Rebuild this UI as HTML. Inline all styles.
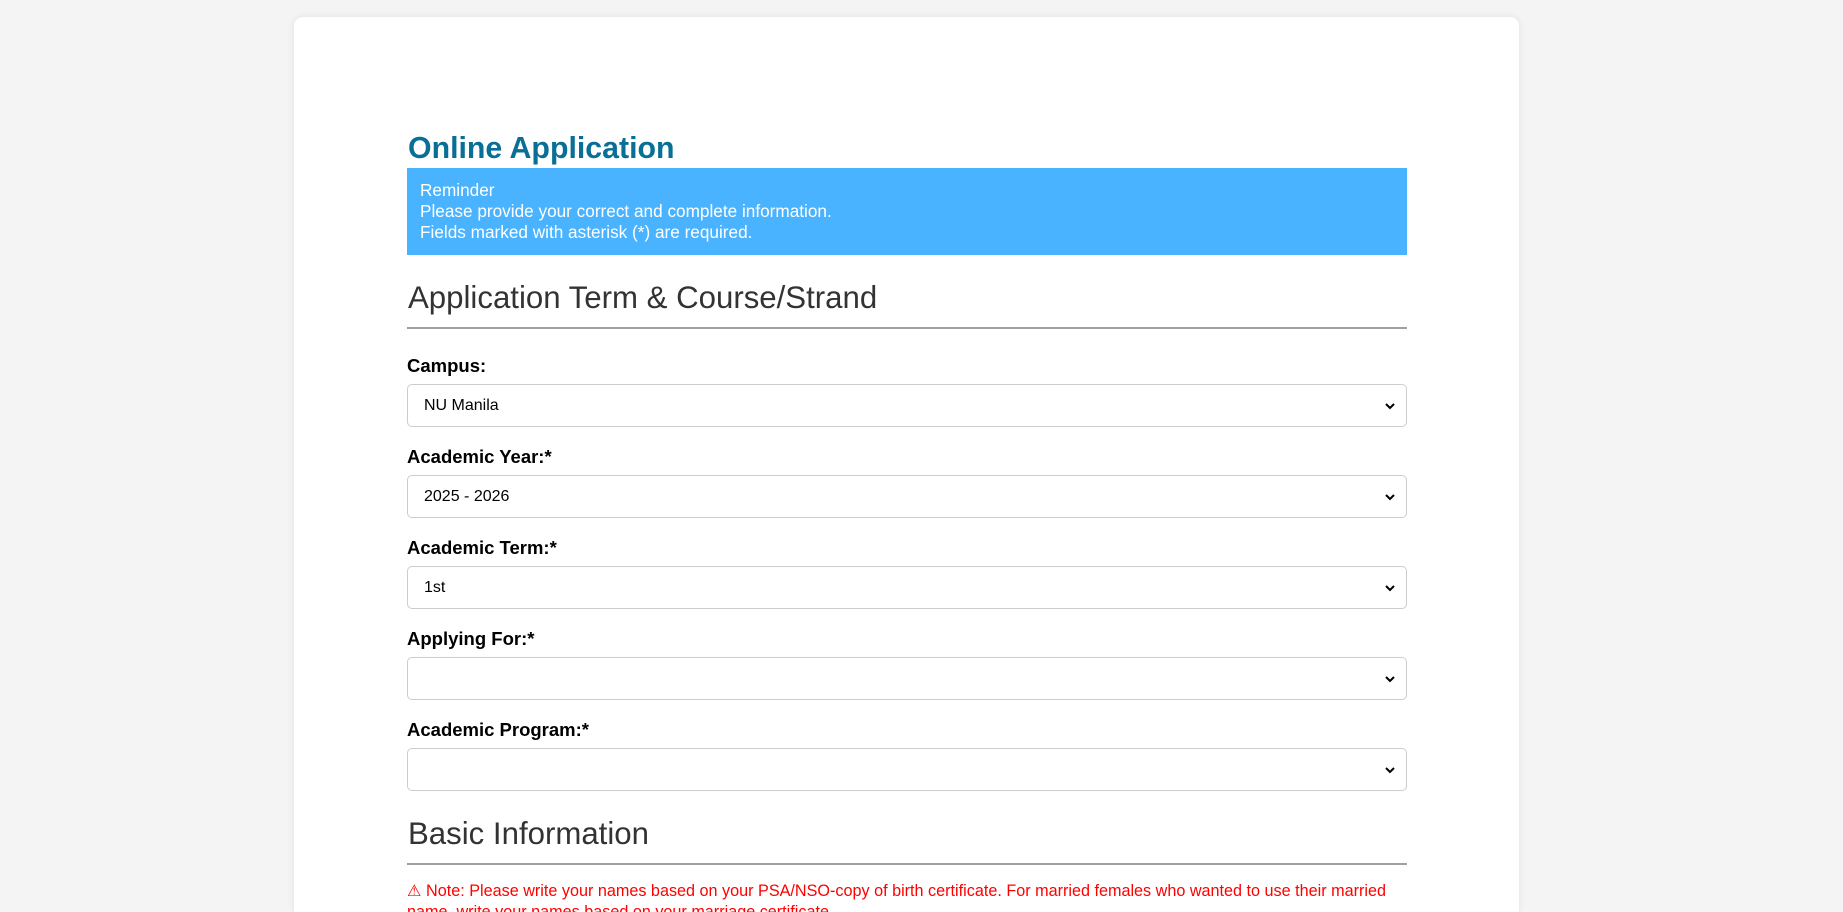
<!DOCTYPE html>
<html><head><meta charset="utf-8"><style>
*{box-sizing:border-box;margin:0;padding:0}
html{height:912px;overflow:hidden}
body{width:1843px;height:912px;background:#f4f4f4;font-family:"Liberation Sans",Arial,sans-serif;overflow:hidden;position:relative}
.card{position:absolute;left:294px;top:17px;width:1225px;height:895px;background:#fff;border-radius:9px 9px 0 0;box-shadow:0 0 8px rgba(0,0,0,0.08)}
.a{position:absolute;left:407px;width:1000px}
h1{position:absolute;left:408px;top:132px;font-size:30.3px;font-weight:bold;color:#0a6f96}
.rem{top:168px;height:87px;background:#4ab3ff;color:#fff;font-size:17.2px;line-height:21px;padding:12px 13px}
.h{font-size:31.2px;color:#333;font-weight:normal;left:408px}
.hr{height:2px;background:#a0a0a0}
.lbl{font-size:18.5px;font-weight:bold;color:#000;left:407px}
.sel{height:43px;border:1px solid #ccc;border-radius:5px;font-size:16px;color:#000;padding-left:16px;line-height:41px}
.sel svg{position:absolute;right:10px;top:16px}
.note{top:881px;font-size:16.2px;color:#f00;line-height:21px}
</style></head><body>
<div class="card"></div>
<h1>Online Application</h1>
<div class="a rem">Reminder<br>Please provide your correct and complete information.<br>Fields marked with asterisk (*) are required.</div>
<div class="a h" style="top:280px">Application Term &amp; Course/Strand</div>
<div class="a hr" style="top:327px"></div>

<div class="a lbl" style="top:355px">Campus:</div>
<div class="a sel" style="top:384px">NU Manila<svg width="12" height="10" viewBox="0 0 12 10"><path d="M2 3l4 4 4-4" fill="none" stroke="#000" stroke-width="2"/></svg></div>
<div class="a lbl" style="top:446px">Academic Year:*</div>
<div class="a sel" style="top:475px">2025 - 2026<svg width="12" height="10" viewBox="0 0 12 10"><path d="M2 3l4 4 4-4" fill="none" stroke="#000" stroke-width="2"/></svg></div>
<div class="a lbl" style="top:537px">Academic Term:*</div>
<div class="a sel" style="top:566px">1st<svg width="12" height="10" viewBox="0 0 12 10"><path d="M2 3l4 4 4-4" fill="none" stroke="#000" stroke-width="2"/></svg></div>
<div class="a lbl" style="top:628px">Applying For:*</div>
<div class="a sel" style="top:657px"><svg width="12" height="10" viewBox="0 0 12 10"><path d="M2 3l4 4 4-4" fill="none" stroke="#000" stroke-width="2"/></svg></div>
<div class="a lbl" style="top:719px">Academic Program:*</div>
<div class="a sel" style="top:748px"><svg width="12" height="10" viewBox="0 0 12 10"><path d="M2 3l4 4 4-4" fill="none" stroke="#000" stroke-width="2"/></svg></div>

<div class="a h" style="top:816px">Basic Information</div>
<div class="a hr" style="top:863px"></div>
<div class="a note">⚠ Note: Please write your names based on your PSA/NSO-copy of birth certificate. For married females who wanted to use their married name, write your names based on your marriage certificate.</div>
</body></html>
